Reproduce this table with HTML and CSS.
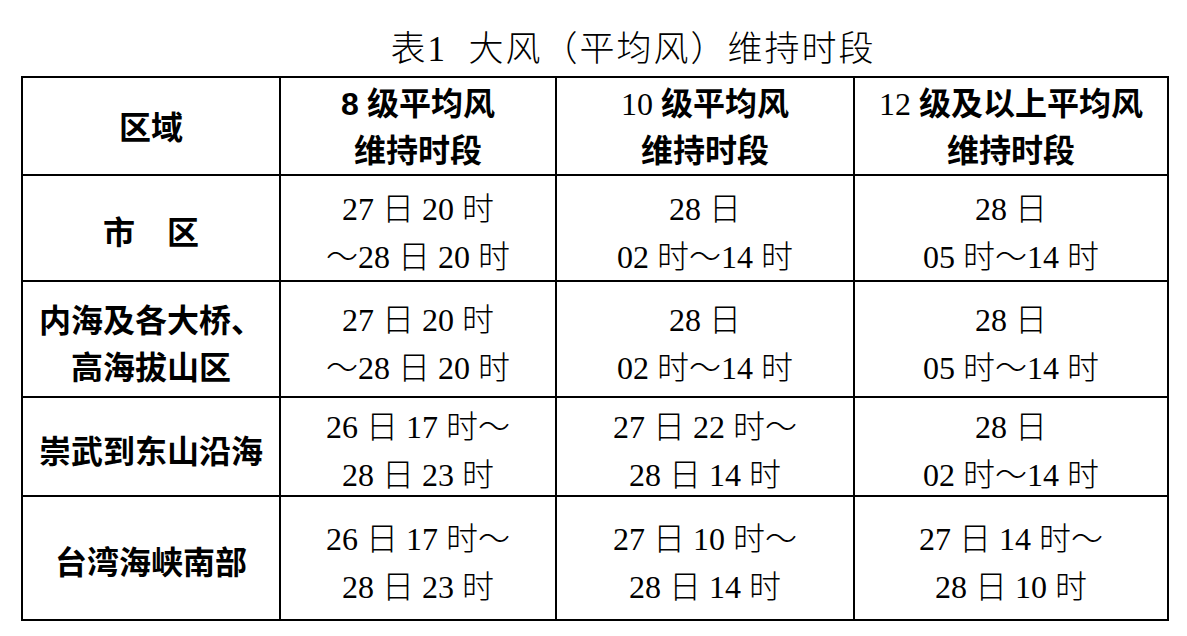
FILE: index.html
```html
<!DOCTYPE html>
<html lang="zh-CN">
<head>
<meta charset="utf-8">
<title>表1 大风（平均风）维持时段</title>
<link rel="stylesheet" href="styles.css">
</head>
<body>
<div class="page">
  <h1 class="title">表1&nbsp;&nbsp;大风（平均风）维持时段</h1>
  <div class="table">
    <div class="cell head"><div class="txt">区域</div></div>
    <div class="cell head"><div class="txt"><span class="num8">8</span> 级平均风<br>维持时段</div></div>
    <div class="cell head"><div class="txt"><span class="num">10</span> 级平均风<br>维持时段</div></div>
    <div class="cell head"><div class="txt"><span class="num">12</span> 级及以上平均风<br>维持时段</div></div>

    <div class="cell area"><div class="txt">市　区</div></div>
    <div class="cell"><div class="txt">27 日 20 时<br>～28 日 20 时</div></div>
    <div class="cell"><div class="txt">28 日<br>02 时～14 时</div></div>
    <div class="cell"><div class="txt">28 日<br>05 时～14 时</div></div>

    <div class="cell area"><div class="txt">内海及各大桥、<br>高海拔山区</div></div>
    <div class="cell"><div class="txt">27 日 20 时<br>～28 日 20 时</div></div>
    <div class="cell"><div class="txt">28 日<br>02 时～14 时</div></div>
    <div class="cell"><div class="txt">28 日<br>05 时～14 时</div></div>

    <div class="cell area"><div class="txt">崇武到东山沿海</div></div>
    <div class="cell"><div class="txt">26 日 17 时～<br>28 日 23 时</div></div>
    <div class="cell"><div class="txt">27 日 22 时～<br>28 日 14 时</div></div>
    <div class="cell"><div class="txt">28 日<br>02 时～14 时</div></div>

    <div class="cell area"><div class="txt">台湾海峡南部</div></div>
    <div class="cell"><div class="txt">26 日 17 时～<br>28 日 23 时</div></div>
    <div class="cell"><div class="txt">27 日 10 时～<br>28 日 14 时</div></div>
    <div class="cell"><div class="txt">27 日 14 时～<br>28 日 10 时</div></div>
  </div>
</div>
</body>
</html>
```

FILE: styles.css
```css
html, body {
  margin: 0;
  padding: 0;
  background: #ffffff;
}

.page {
  width: 1187px;
  height: 636px;
  overflow: hidden;
  color: #000000;
}

.title {
  margin: 0;
  height: 76px;
  box-sizing: border-box;
  padding: 27px 0 0 79px;
  text-align: center;
  font-family: "Liberation Serif", "Noto Sans CJK SC", serif;
  font-weight: 300;
  font-size: 35px;
  letter-spacing: 2px;
  line-height: 46px;
  white-space: nowrap;
}

.table {
  margin-left: 21px;
  width: 1148px;
  box-sizing: border-box;
  display: grid;
  grid-template-columns: 256px 274px 296px 312px;
  grid-template-rows: 96px 104px 114px 97px 122px;
  gap: 2px;
  padding: 2px;
  background: #000000;
}

.cell {
  background: #ffffff;
  display: flex;
  align-items: center;
  justify-content: center;
  box-sizing: border-box;
  padding-top: 9px;
  text-align: center;
  font-family: "Liberation Serif", "Noto Sans CJK SC", serif;
  font-weight: 300;
  font-size: 32px;
  line-height: 48px;
  white-space: nowrap;
}

.txt {
  text-align: center;
}

.head {
  font-family: "Liberation Serif", "Noto Sans CJK SC", sans-serif;
  font-weight: 700;
  line-height: 47px;
  padding-top: 4px;
}

.head .num {
  font-weight: 400;
}

.head .num8 {
  font-family: "Liberation Sans", sans-serif;
  font-weight: 700;
}

.area {
  font-family: "Noto Sans CJK SC", sans-serif;
  font-weight: 700;
  line-height: 47px;
  padding-top: 5px;
}
```
